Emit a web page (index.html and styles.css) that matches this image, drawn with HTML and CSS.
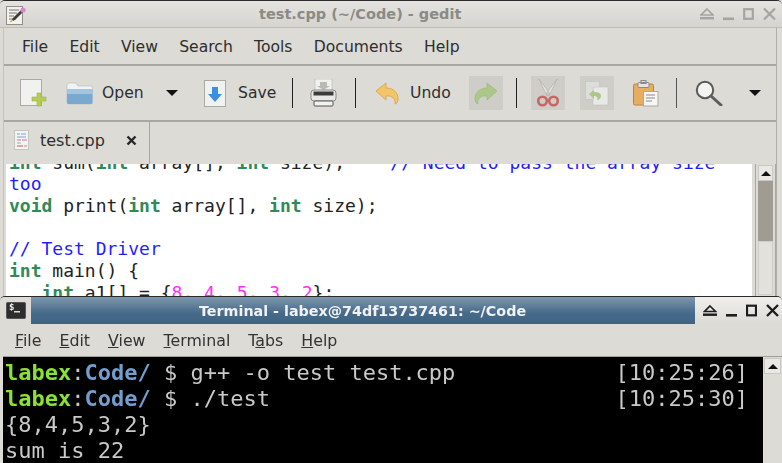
FILE: index.html
```html
<!DOCTYPE html>
<html lang="en">
<head>
<meta charset="utf-8">
<title>Desktop</title>
<link rel="stylesheet" href="styles.css">
</head>
<body>
<div class="screen">
  <section class="gedit">
    <header class="gtitle">
      <svg class="appicon" width="26" height="24" viewBox="0 0 26 24"><rect x="5.5" y="4.5" width="16" height="18" fill="#f2f1ee" stroke="#8f8f8b"/><path d="M8 8h10M8 11h8M8 14h5M8 17h4" stroke="#77776f" stroke-width="1.2"/><path d="M9 20l3-4 9-9 2 2-9 9z" fill="#3a3a38"/><path d="M9 20l1.6-3 1.6 1.6z" fill="#e8c84a"/><circle cx="22" cy="8" r="2.6" fill="#d68ac8"/></svg>
      <h1 class="gtitle-text">test.cpp (~/Code) - gedit</h1>
      <div class="wbtns wbtns-g">
        <svg width="14" height="14" viewBox="0 0 14 14"><path d="M7 2l6 6H1z" fill="none" stroke="currentColor" stroke-width="1.6"/><rect x="0" y="10" width="14" height="2.4" fill="currentColor"/></svg>
        <svg width="11" height="14" viewBox="0 0 11 14"><rect y="10.5" width="11" height="2.6" fill="currentColor"/></svg>
        <svg width="11" height="14" viewBox="0 0 11 14"><rect x="1.2" y="2.2" width="8.6" height="9.6" fill="none" stroke="currentColor" stroke-width="2.2"/></svg>
        <svg width="13" height="14" viewBox="0 0 13 14"><path d="M1 1.5l11 11M12 1.5l-11 11" stroke="currentColor" stroke-width="2.2"/></svg>
      </div>
    </header>
    <div class="gbody">
      <nav class="gmenu"><span>File</span><span>Edit</span><span>View</span><span>Search</span><span>Tools</span><span>Documents</span><span>Help</span></nav>
      <div class="toolbar">
        <svg class="t-new" width="27" height="29" viewBox="0 0 27 29"><rect x=".5" y=".5" width="21" height="26" fill="#f1f1ef" stroke="#a9a9a5"/><path d="M17 14h4v4h5v4h-5v5h-4v-5h-5v-4h5z" fill="#b4cd55" stroke="#9db544" stroke-width=".6"/></svg>
        <svg class="t-open" width="27" height="24" viewBox="0 0 27 24"><path d="M1 4q0-2 2-2h7l2 3h13q1.500 0 1.500 2v14q0 2-2 2H3q-2 0-2-2z" fill="#f0f2f3" stroke="#b4bcc2" stroke-width=".6"/><rect x="1" y="8" width="25.500" height="15" rx="1.500" fill="#7aa9d0"/><rect x="1" y="8" width="25.500" height="5" fill="#a3c5e0"/></svg>
        <span class="t-label l-open">Open</span>
        <i class="caret c-open"></i>
        <svg class="t-save" width="22" height="27" viewBox="0 0 22 27"><rect x=".5" y=".5" width="21" height="26" fill="#f1f1ef" stroke="#a9a9a5"/><path d="M8 7h6v7h4l-7 8-7-8h4z" fill="#3b8fdc"/></svg>
        <span class="t-label l-save">Save</span>
        <i class="sep s1"></i>
        <svg class="t-print" width="27" height="28" viewBox="0 0 27 28"><rect x="5" y="0" width="17" height="13" fill="#f0f0ee" stroke="#b5b5b2" stroke-width=".6"/><path d="M10 3h7v4h3l-6.500 4L7 7h3z" fill="#b9b9b6"/><rect x="1" y="11" width="25" height="11" rx="3" fill="#e8e8e6" stroke="#8a8a88"/><rect x="3.500" y="12.500" width="20" height="4" fill="#3c3c3c"/><rect x="4" y="22" width="19" height="5" rx="1" fill="#f2f2f0" stroke="#555" stroke-width="1"/></svg>
        <i class="sep s2"></i>
        <svg class="t-undo" width="24" height="23" viewBox="0 0 24 23"><path d="M1 9L11 1v5c8 0 12 5 12 11 0 2-1 5-3 5 1-5-3-9-9-8v4z" fill="#f3c568" stroke="#dca13c" stroke-width=".8"/></svg>
        <span class="t-label l-undo">Undo</span>
        <div class="dis d-redo"><svg width="24" height="23" viewBox="0 0 24 23"><path d="M23 9L13 1v5C5 6 1 11 1 17c0 2 1 5 3 5-1-5 3-9 9-8v4z" fill="#a9c784" stroke="#97b574" stroke-width=".6"/></svg></div>
        <i class="sep s3"></i>
        <div class="dis d-cut"><svg width="24" height="28" viewBox="0 0 24 28"><path d="M3 0l8 17 3-2zM21 0l-8 17-3-2z" fill="#e6e6e4" stroke="#a8a8a6" stroke-width=".6"/><circle cx="6.500" cy="22" r="4.300" fill="none" stroke="#c7605f" stroke-width="2.600"/><circle cx="17.500" cy="22" r="4.300" fill="none" stroke="#c7605f" stroke-width="2.600"/></svg></div>
        <div class="dis d-copy"><svg width="24" height="25" viewBox="0 0 24 25"><rect x=".5" y=".5" width="14" height="18" fill="#dededc" stroke="#c2c2c0" stroke-width=".6"/><rect x="8" y="6" width="15" height="18" fill="#e9e9e7" stroke="#c2c2c0" stroke-width=".6"/><path d="M4 13l5-4v2c4 0 7 1 7 4 0 2-2 4-4 4 1-2 0-4-3-4v3z" fill="#a9c784"/></svg></div>
        <svg class="t-paste" width="26" height="27" viewBox="0 0 26 27"><rect x=".5" y="4" width="20" height="21" rx="1.500" fill="#e6ae62" stroke="#b8843f"/><rect x="5" y="2.500" width="11" height="5" rx="1" fill="#e4e4e2" stroke="#8a8a88"/><rect x="8" y=".5" width="5" height="3" fill="none" stroke="#8a8a88"/><rect x="10.500" y="11.500" width="14.500" height="14.500" fill="#f6f6f5" stroke="#a9a9a6"/><path d="M13 15h9M13 18h9M13 21h6" stroke="#8a8a88" stroke-width="1.200"/></svg>
        <i class="sep s4"></i>
        <svg class="t-search" width="28" height="26" viewBox="0 0 28 26"><circle cx="10" cy="10" r="8.200" fill="#f3f3f1" stroke="#5a5a58" stroke-width="2"/><path d="M16 16l10 9" stroke="#5e5e5c" stroke-width="3" stroke-linecap="round"/></svg>
        <i class="caret c-search"></i>
      </div>
      <div class="tabbar">
        <div class="tab">
          <svg width="16" height="20" viewBox="0 0 16 20"><rect x=".5" y=".5" width="14" height="19" fill="#f3f3f1" stroke="#c4c4c0"/><path d="M3 4h3M7 4h5M3 7h9" stroke="#7ea6cf" stroke-width="1.200"/><path d="M3 10h4M8 10h5" stroke="#d070b0" stroke-width="1.200"/><path d="M3 13h4" stroke="#8cc08c" stroke-width="1.200"/><path d="M3 16h6" stroke="#e05050" stroke-width="1.200"/><path d="M10 16h3" stroke="#999" stroke-width="1.200"/></svg>
          <span class="tab-name">test.cpp</span>
          <svg class="tab-x" width="11" height="11" viewBox="0 0 11 11"><path d="M1.500 1.500l8 8M9.500 1.500l-8 8" stroke="#262626" stroke-width="2.400"/></svg>
        </div>
      </div>
      <div class="editor">
        <div class="code"><pre class="code-text"><b>int</b> sum(<b>int</b> array[], <b>int</b> size);    <em class="shift">// Need to pass the array size</em>
<em>too</em>
<b>void</b> print(<b>int</b> array[], <b>int</b> size);

<em>// Test Driver</em>
<b>int</b> main() {
   <b>int</b> a1[] = {<s>8</s>, <s>4</s>, <s>5</s>, <s>3</s>, <s>2</s>};</pre></div>
        <div class="vscroll"><span class="up"><i></i></span><span class="thumb"></span><span class="rest"></span></div>
      </div>
    </div>
  </section>
  <section class="term">
    <header class="ttitle">
      <div class="ticon"><svg width="20" height="17" viewBox="0 0 20 17"><rect x=".5" y=".5" width="19" height="16" rx="1" fill="#2e2e2e" stroke="#555"/><text x="3" y="8" class="ps">$</text><rect x="8" y="9" width="6" height="1.500" fill="#ddd"/></svg></div>
      <h2 class="ttitle-text">Terminal - labex@74df13737461: ~/Code</h2>
      <div class="wbtns wbtns-t">
        <svg width="14" height="14" viewBox="0 0 14 14"><path d="M7 2l5.500 5.500h-11z" fill="none" stroke="currentColor" stroke-width="1.600"/><rect x="0" y="9.500" width="14" height="2.400" fill="currentColor"/></svg>
        <svg width="11" height="14" viewBox="0 0 11 14"><rect y="10" width="11" height="2.600" fill="currentColor"/></svg>
        <svg width="11" height="14" viewBox="0 0 11 14"><rect x="1" y="1.700" width="9" height="9.600" fill="none" stroke="currentColor" stroke-width="2.200"/></svg>
        <svg width="13" height="14" viewBox="0 0 13 14"><path d="M1 1l11 11M12 1l-11 11" stroke="currentColor" stroke-width="2.400"/></svg>
      </div>
    </header>
    <nav class="tmenu"><span><u>F</u>ile</span><span><u>E</u>dit</span><span><u>V</u>iew</span><span><u>T</u>erminal</span><span>T<u>a</u>bs</span><span><u>H</u>elp</span></nav>
    <div class="tbody">
      <div class="console">
        <div class="line"><span><b class="u">labex</b>:<b class="d">Code/</b> $ g++ -o test test.cpp</span><span>[10:25:26]</span></div>
        <div class="line"><span><b class="u">labex</b>:<b class="d">Code/</b> $ ./test</span><span>[10:25:30]</span></div>
        <div class="line"><span>{8,4,5,3,2}</span></div>
        <div class="line"><span>sum is 22</span></div>
      </div>
      <div class="tscroll"><span class="up"><i></i></span></div>
    </div>
  </section>
</div>
</body>
</html>
```

FILE: styles.css
```css
html, body { margin: 0; padding: 0; background: #dcdbd6; }
body { width: 782px; height: 463px; overflow: hidden; font-family: "DejaVu Sans", sans-serif; }
.screen { width: 782px; height: 463px; overflow: hidden; display: flex; flex-direction: column; filter: blur(.45px); }
h1, h2 { margin: 0; font-weight: 700; }

.gedit { height: 296px; flex: none; display: flex; flex-direction: column; background: #dcdbd6; border-top: 1px solid #2b2b2b; box-sizing: border-box; border-radius: 5px 5px 0 0; overflow: hidden; }
.gtitle { height: 26px; flex: none; display: flex; align-items: center; background: linear-gradient(#e4e3df, #d5d4cf); border-bottom: 1px solid #bdbcb6; position: relative; }
.appicon { margin-left: 1px; flex: none; }
.gtitle-text { position: absolute; left: 259px; top: 5px; font-size: 14.5px; color: #8a8a86; white-space: nowrap; }
.wbtns { margin-left: auto; display: flex; align-items: center; }
.wbtns-g { color: #a5a5a0; gap: 9px; margin-right: 6px; }

.gbody { flex: 1; min-height: 0; margin: 0 5px 0 3px; display: flex; flex-direction: column; border-left: 1px solid #c4c3bd; border-right: 1px solid #b0afa9; }
.gmenu { height: 38px; flex: none; display: flex; align-items: center; padding: 1px 0 0 18px; gap: 21.3px; font-size: 15.6px; color: #2e2e2e; border-bottom: 2px solid #a8a7a1; box-sizing: border-box; }

.toolbar { height: 56px; flex: none; display: flex; align-items: center; border-bottom: 2px solid #a8a7a1; box-sizing: border-box; color: #2e2e2e; font-size: 15.6px; }
.toolbar > * { flex: none; }
.t-new { margin-left: 16px; }
.t-open { margin-left: 19px; }
.l-open { margin-left: 9px; width: 41px; }
.caret { display: block; width: 0; height: 0; border-left: 6px solid transparent; border-right: 6px solid transparent; border-top: 6px solid #111; }
.c-open { margin-left: 23px; }
.t-save { margin-left: 26px; }
.l-save { margin-left: 12px; width: 38px; }
.sep { display: block; width: 1px; height: 30px; background: #222; }
.s1 { margin-left: 16px; }
.t-print { margin-left: 17px; }
.s2 { margin-left: 18px; }
.t-undo { margin-left: 19px; }
.l-undo { margin-left: 11px; width: 41px; }
.dis { width: 34px; height: 34px; background: #cecdc7; display: flex; align-items: center; justify-content: center; opacity: .95; }
.d-redo { margin-left: 18px; }
.s3 { margin-left: 13px; }
.d-cut { margin-left: 14px; }
.d-copy { margin-left: 15px; }
.t-paste { margin-left: 19px; }
.s4 { margin-left: 17px; background: #555; }
.t-search { margin-left: 18px; }
.c-search { margin-left: 26px; }

.tabbar { height: 42px; flex: none; display: flex; }
.tab { width: 146px; box-sizing: border-box; border-right: 1px solid #a8a7a1; display: flex; align-items: center; padding: 0 0 6px 10px; color: #2e2e2e; font-size: 16px; }
.tab-name { margin-left: 10px; }
.tab-x { margin-left: 21px; }

.editor { flex: 1; min-height: 0; display: flex; background: #fff; margin-left: 2px; }
.code { flex: 1; min-width: 0; overflow: hidden; border-right: 3px solid #dcdbd6; }
.code-text { margin: -12.5px 0 0 3px; font: 18px/21.7px "DejaVu Sans Mono", monospace; color: #222; }
.code-text b { font-weight: 700; color: #2e8b57; }
.code-text em { font-style: normal; color: #1f1fff; }
.code-text .shift { padding-left: 2px; }
.code-text s { text-decoration: none; color: #ff2dff; }
.vscroll { width: 21px; flex: none; box-sizing: border-box; padding: 1px 2px; background: #dcdbd6; border-left: 1px solid #a8a7a1; border-right: 1px solid #a8a7a1; display: flex; flex-direction: column; }
.up { display: flex; height: 16px; flex: none; align-items: center; justify-content: center; background: #e9e8e4; border: 1px solid #c9c8c2; box-sizing: border-box; }
.up i { display: block; width: 0; height: 0; border-left: 5px solid transparent; border-right: 5px solid transparent; border-bottom: 5px solid #111; }
.thumb { height: 60px; flex: none; background: #a09c94; }
.rest { flex: 1; background: #e2e1dc; border: 1px solid #cfcec8; }

.term { flex: 1; min-height: 0; display: flex; flex-direction: column; background: #dcdbd6; border-top: 1px solid #2a2a2a; border-radius: 5px 5px 0 0; overflow: hidden; }
.ttitle { height: 27px; flex: none; display: flex; align-items: center; position: relative; background: linear-gradient(#7d97ad, #466a8a 60%, #3f6383); }
.ticon { width: 31px; height: 27px; flex: none; background: #dcdbd6; display: flex; align-items: center; justify-content: center; }
.ps { font: 700 9px "DejaVu Sans Mono", monospace; fill: #eee; }
.ttitle-text { position: absolute; left: 199px; top: 6px; font-size: 14.3px; color: #f0f2f4; white-space: nowrap; }
.wbtns-t { width: 87px; height: 27px; box-sizing: border-box; padding-left: 8px; gap: 9px; background: linear-gradient(#f0efec, #dcdbd6); color: #1d1d1d; }

.tmenu { height: 32px; flex: none; display: flex; align-items: center; padding: 1px 0 0 15px; gap: 18px; font-size: 15.8px; color: #333; box-sizing: border-box; }
.tbody { flex: 1; min-height: 0; display: flex; margin-left: 3px; border-top: 1px solid #9f9e98; }
.console { flex: 1; background: #000; color: #c9c9c9; font: 22px/26px "DejaVu Sans Mono", monospace; padding: 3px 15px 0 2px; overflow: hidden; }
.line { display: flex; justify-content: space-between; height: 26px; white-space: pre; }
.u { font-weight: 700; color: #8ae234; }
.d { font-weight: 700; color: #729fcf; }
.tscroll { width: 19px; flex: none; box-sizing: border-box; background: #dcdbd6; padding: 1px; display: flex; flex-direction: column; }
```
